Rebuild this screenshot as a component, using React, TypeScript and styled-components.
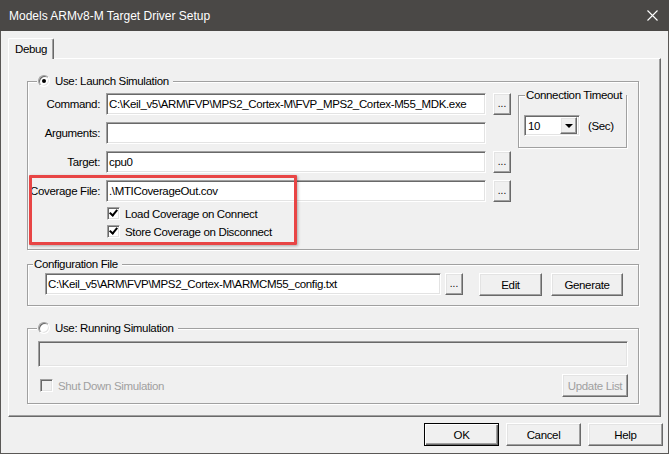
import React from "react";
import styled, { createGlobalStyle, css } from "styled-components";

const GlobalStyle = createGlobalStyle`
  html, body {
    margin: 0;
    padding: 0;
    background: #f0f0f0;
  }
  * {
    box-sizing: border-box;
  }
`;

// classic win32 3d edges
const sunken = css`
  border: 1px solid;
  border-color: #a0a0a0 #ffffff #ffffff #a0a0a0;
  box-shadow: inset 1px 1px 0 #696969, inset -1px -1px 0 #e3e3e3;
`;

const raised = css`
  border: 1px solid;
  border-color: #ffffff #696969 #696969 #ffffff;
  box-shadow: inset -1px -1px 0 #a0a0a0, inset 1px 1px 0 #e3e3e3;
`;

const App = () => {
  return (
    <>
      <GlobalStyle />
      <Window>
        <TitleBar>
          <TitleText>Models ARMv8-M Target Driver Setup</TitleText>
          <CloseIcon width="11" height="11" viewBox="0 0 11 11">
            <path d="M0.5 0.5 L10.5 10.5 M10.5 0.5 L0.5 10.5" stroke="#ffffff" strokeWidth="1.1" />
          </CloseIcon>
        </TitleBar>

        <Body>
          <TabStrip>
            <Tab>Debug</Tab>
          </TabStrip>

          <Panel>
            <GroupBox>
              <Legend $offset={9}>
                <Radio $checked />
                Use: Launch Simulation
              </Legend>
              <LaunchBody>
                <FormColumn>
                  <FormGrid>
                    <FieldLabel>Command:</FieldLabel>
                    <TextField>C:\Keil_v5\ARM\FVP\MPS2_Cortex-M\FVP_MPS2_Cortex-M55_MDK.exe</TextField>
                    <BrowseButton>...</BrowseButton>

                    <FieldLabel>Arguments:</FieldLabel>
                    <TextField />
                    <span />

                    <FieldLabel>Target:</FieldLabel>
                    <TextField>cpu0</TextField>
                    <BrowseButton>...</BrowseButton>

                    <FieldLabel>Coverage File:</FieldLabel>
                    <TextField>.\MTICoverageOut.cov</TextField>
                    <BrowseButton>...</BrowseButton>
                  </FormGrid>
                  <CheckList>
                    <CheckRow>
                      <CheckBox $checked />
                      Load Coverage on Connect
                    </CheckRow>
                    <CheckRow>
                      <CheckBox $checked />
                      Store Coverage on Disconnect
                    </CheckRow>
                  </CheckList>
                </FormColumn>

                <TimeoutBox>
                  <Legend $offset={6}>Connection Timeout</Legend>
                  <TimeoutRow>
                    <Combo>
                      <ComboText>10</ComboText>
                      <ComboArrow>
                        <Triangle />
                      </ComboArrow>
                    </Combo>
                    (Sec)
                  </TimeoutRow>
                </TimeoutBox>
              </LaunchBody>
            </GroupBox>

            <GroupBox $gap={14}>
              <Legend $offset={5}>Configuration File</Legend>
              <ConfigRow>
                <TextField $width={396}>C:\Keil_v5\ARM\FVP\MPS2_Cortex-M\ARMCM55_config.txt</TextField>
                <BrowseButton $left={4}>...</BrowseButton>
                <PushButton $width={63} $left={16}>Edit</PushButton>
                <PushButton $width={72} $left={9}>Generate</PushButton>
              </ConfigRow>
            </GroupBox>

            <GroupBox $gap={22}>
              <Legend $offset={9}>
                <Radio />
                Use: Running Simulation
              </Legend>
              <RunField />
              <RunRow>
                <CheckRow $disabled>
                  <CheckBox $disabled />
                  Shut Down Simulation
                </CheckRow>
                <PushButton $width={66} $disabled>Update List</PushButton>
              </RunRow>
            </GroupBox>
          </Panel>

          <Footer>
            <PushButton $width={75} $default>OK</PushButton>
            <PushButton $width={75}>Cancel</PushButton>
            <PushButton $width={75}>Help</PushButton>
          </Footer>
        </Body>

        <Highlight />
      </Window>
    </>
  );
};

export default App;

const Window = styled.div`
  position: relative;
  width: 669px;
  height: 454px;
  display: flex;
  flex-direction: column;
  font-family: "Liberation Sans", Arial, sans-serif;
  font-size: 11.5px;
  letter-spacing: -0.35px;
  color: #000;
`;

const TitleBar = styled.div`
  height: 31px;
  flex-shrink: 0;
  display: flex;
  align-items: center;
  justify-content: space-between;
  padding: 0 11px 0 9px;
  background: #4a4846;
  color: #fff;
`;

const TitleText = styled.div`
  font-size: 12px;
  letter-spacing: 0;
`;

const CloseIcon = styled.svg`
  display: block;
`;

const Body = styled.div`
  flex: 1;
  display: flex;
  flex-direction: column;
  padding: 7px 0 0 7px;
  background: #f0f0f0;
  border: 1px solid #5a5856;
  border-top: none;
`;

const TabStrip = styled.div`
  display: flex;
  height: 20px;
`;

const Tab = styled.div`
  position: relative;
  z-index: 1;
  width: 46px;
  height: 21px;
  display: flex;
  align-items: center;
  justify-content: center;
  padding-bottom: 1px;
  background: #f0f0f0;
  border-top: 1px solid #fff;
  border-left: 1px solid #fff;
  border-right: 1px solid #696969;
  border-radius: 2px 2px 0 0;
  box-shadow: inset -1px 0 0 #a0a0a0;
`;

const Panel = styled.div`
  width: 653px;
  height: 359px;
  padding: 22px 0 0 18px;
  border: 1px solid;
  border-color: #fff #696969 #696969 #fff;
  box-shadow: inset -1px -1px 0 #a0a0a0;
`;

const GroupBox = styled.div<{ $gap?: number }>`
  width: 612px;
  margin-top: ${(p) => p.$gap ?? 0}px;
  display: flex;
  flex-direction: column;
  border: 1px solid #a0a0a0;
  box-shadow: inset 1px 1px 0 #fff, 1px 1px 0 #fff;
`;

const Legend = styled.div<{ $offset: number }>`
  align-self: flex-start;
  height: 14px;
  margin: -8px 0 0 ${(p) => p.$offset}px;
  padding: 0 4px 0 1px;
  display: flex;
  align-items: center;
  gap: 5px;
  background: #f0f0f0;
  white-space: nowrap;
`;

const Radio = styled.span<{ $checked?: boolean }>`
  position: relative;
  width: 12px;
  height: 12px;
  flex-shrink: 0;
  border-radius: 50%;
  background: #fff;
  ${sunken};

  &::after {
    content: "";
    display: ${(p) => (p.$checked ? "block" : "none")};
    position: absolute;
    left: 3px;
    top: 3px;
    width: 4px;
    height: 4px;
    border-radius: 50%;
    background: #000;
  }
`;

const LaunchBody = styled.div`
  display: flex;
  align-items: flex-start;
  margin-top: 5px;
  padding-bottom: 11px;
`;

const FormColumn = styled.div`
  display: flex;
  flex-direction: column;
`;

const FormGrid = styled.div`
  display: grid;
  grid-template-columns: 72px 380px 19px;
  grid-auto-rows: 22px;
  column-gap: 6px;
  row-gap: 7px;
  align-items: center;
`;

const FieldLabel = styled.div`
  text-align: right;
  white-space: nowrap;
`;

const TextField = styled.div<{ $width?: number }>`
  width: ${(p) => (p.$width ? `${p.$width}px` : "100%")};
  height: 22px;
  display: flex;
  align-items: center;
  padding: 0 2px;
  background: #fff;
  white-space: nowrap;
  overflow: hidden;
  ${sunken};
`;

const BrowseButton = styled.div<{ $left?: number }>`
  justify-self: end;
  width: 18px;
  height: 22px;
  margin-left: ${(p) => p.$left ?? 0}px;
  display: flex;
  align-items: flex-end;
  justify-content: center;
  padding-bottom: 5px;
  font-size: 10px;
  line-height: 10px;
  letter-spacing: 0;
  background: #f0f0f0;
  ${raised};
`;

const CheckList = styled.div`
  display: flex;
  flex-direction: column;
  gap: 5px;
  margin-top: 5px;
  padding-left: 79px;
`;

const CheckRow = styled.div<{ $disabled?: boolean }>`
  display: flex;
  align-items: center;
  gap: 5px;
  height: 13px;
  white-space: nowrap;
  color: ${(p) => (p.$disabled ? "#a0a0a0" : "#000")};
`;

const CheckBox = styled.span<{ $checked?: boolean; $disabled?: boolean }>`
  position: relative;
  width: 13px;
  height: 13px;
  flex-shrink: 0;
  background: ${(p) => (p.$disabled ? "#f0f0f0" : "#fff")};
  ${sunken};

  &::after {
    content: "";
    display: ${(p) => (p.$checked ? "block" : "none")};
    position: absolute;
    left: 3px;
    top: 0px;
    width: 3px;
    height: 6px;
    border: solid #000;
    border-width: 0 2px 2px 0;
    transform: rotate(40deg);
  }
`;

const TimeoutBox = styled.div`
  width: 109px;
  margin: 2px 0 0 7px;
  display: flex;
  flex-direction: column;
  border: 1px solid #a0a0a0;
  box-shadow: inset 1px 1px 0 #fff, 1px 1px 0 #fff;
`;

const TimeoutRow = styled.div`
  display: flex;
  align-items: center;
  gap: 8px;
  margin-top: 13px;
  padding: 0 0 11px 5px;
`;

const Combo = styled.div`
  width: 56px;
  height: 21px;
  display: flex;
  align-items: center;
  justify-content: space-between;
  padding: 0 2px 0 3px;
  background: #fff;
  ${sunken};
`;

const ComboText = styled.span`
  font-size: 11.5px;
`;

const ComboArrow = styled.div`
  width: 17px;
  height: 17px;
  display: flex;
  align-items: center;
  justify-content: center;
  background: #f0f0f0;
  ${raised};
`;

const Triangle = styled.span`
  width: 0;
  height: 0;
  border-left: 4px solid transparent;
  border-right: 4px solid transparent;
  border-top: 4px solid #000;
  margin-top: 1px;
`;

const ConfigRow = styled.div`
  display: flex;
  align-items: flex-start;
  margin-top: 2px;
  padding: 0 0 9px 17px;
`;

const PushButton = styled.div<{
  $width: number;
  $left?: number;
  $default?: boolean;
  $disabled?: boolean;
}>`
  width: ${(p) => p.$width}px;
  height: 23px;
  margin-left: ${(p) => p.$left ?? 0}px;
  display: flex;
  align-items: center;
  justify-content: center;
  flex-shrink: 0;
  white-space: nowrap;
  background: #f0f0f0;
  color: ${(p) => (p.$disabled ? "#a0a0a0" : "#000")};
  ${raised};
  ${(p) =>
    p.$default &&
    css`
      border: 1px solid #000;
      box-shadow: inset 1px 1px 0 #fff, inset -1px -1px 0 #696969,
        inset -2px -2px 0 #a0a0a0;
    `}
`;

const RunField = styled.div`
  width: 590px;
  height: 26px;
  margin: 6px 0 0 10px;
  background: #f0f0f0;
  ${sunken};
`;

const RunRow = styled.div`
  display: flex;
  align-items: center;
  justify-content: space-between;
  margin-top: 7px;
  padding: 0 10px 6px 12px;
`;

const Footer = styled.div`
  display: flex;
  justify-content: flex-end;
  gap: 7px;
  margin-top: 6px;
  padding-right: 5px;
`;

const Highlight = styled.div`
  position: absolute;
  left: 29px;
  top: 175px;
  width: 268px;
  height: 70px;
  border: 3px solid #e84545;
  border-radius: 1px;
  box-shadow: 1px 1px 3px rgba(0, 0, 0, 0.3);
  pointer-events: none;
`;
